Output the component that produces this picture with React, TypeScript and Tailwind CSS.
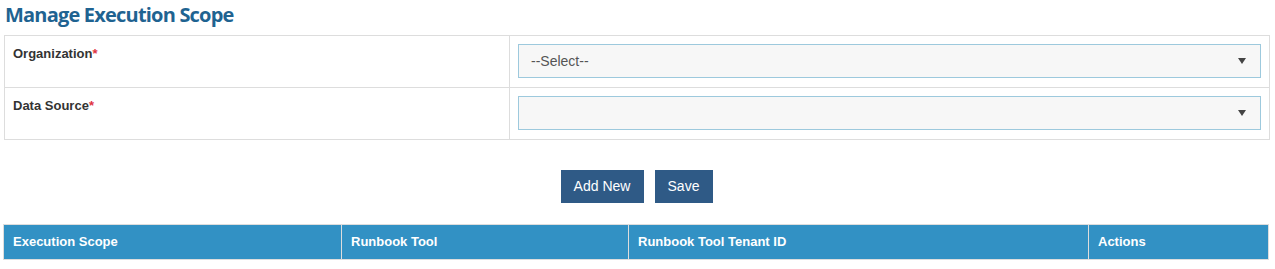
import React from 'react';

const columns = [
  { label: 'Execution Scope', width: 'w-[338px]' },
  { label: 'Runbook Tool', width: 'w-[287px]' },
  { label: 'Runbook Tool Tenant ID', width: 'w-[460px]' },
  { label: 'Actions', width: 'flex-1' },
];

function SelectBox({ value }: { value?: string }) {
  return (
    <div className="flex h-[34px] items-center justify-between border border-[#9dc9dd] bg-[#f7f7f7] pl-[12px] pr-[14px]">
      <span className="text-[14px] text-[#555555]">{value}</span>
      <svg width="8" height="6" viewBox="0 0 8 6" className="fill-[#444444]">
        <path d="M0 0h8L4 6z" />
      </svg>
    </div>
  );
}

function FormRow({ label, value }: { label: string; value?: string }) {
  return (
    <div className="flex h-[52px] border-b border-[#dddddd] last:h-[51px] last:border-b-0">
      <div className="w-[505px] border-r border-[#dddddd] px-[8px] pt-[8px] text-[13px] font-bold text-[#333333]">
        {label}
        <span className="text-[#e0333f]">*</span>
      </div>
      <div className="flex-1 px-[8px] pt-[8px]">
        <SelectBox value={value} />
      </div>
    </div>
  );
}

export default function App() {
  return (
    <div className="w-[1275px] bg-white px-[4px] font-['Liberation_Sans',Arial,sans-serif]">
      <h2 className="pt-[1px] pl-[1px] text-[20px] leading-[28px] font-bold tracking-[-0.8px] text-[#1f6391] font-['Open_Sans',sans-serif]">
        Manage Execution Scope
      </h2>

      <div className="mt-[6px] w-[1266px] border border-[#dddddd]">
        <FormRow label="Organization" value="--Select--" />
        <FormRow label="Data Source" />
      </div>

      <div className="mt-[30px] flex justify-center gap-[11px] pr-[2px]">
        <button className="h-[33px] w-[83px] bg-[#2f5a86] text-[14px] text-white">Add New</button>
        <button className="h-[33px] w-[58px] bg-[#2f5a86] text-[14px] text-white">Save</button>
      </div>

      <div className="-ml-px mt-[21px] flex h-[36px] w-[1266px] border border-[#dddddd] bg-[#3291c4]">
        {columns.map((col) => (
          <div
            key={col.label}
            className={`${col.width} flex items-center whitespace-nowrap border-r border-[#dddddd] px-[9px] text-[13px] font-bold text-white last:border-r-0`}
          >
            {col.label}
          </div>
        ))}
      </div>
    </div>
  );
}
